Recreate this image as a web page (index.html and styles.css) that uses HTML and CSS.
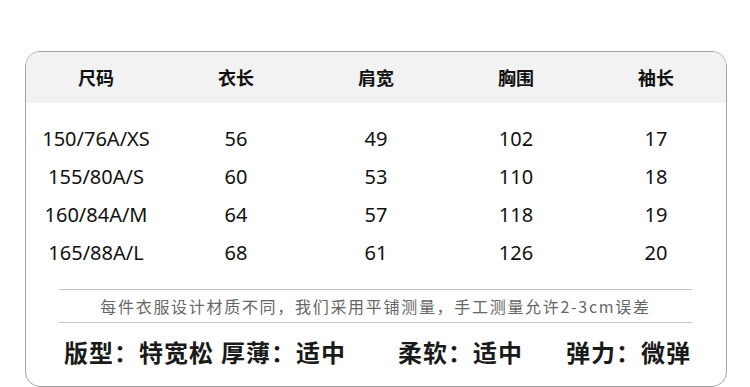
FILE: index.html
```html
<!DOCTYPE html>
<html lang="zh">
<head>
<meta charset="utf-8">
<title>尺码表</title>
<link rel="stylesheet" href="styles.css">
</head>
<body>
<div class="card">
  <div class="row head">
    <div>尺码</div><div>衣长</div><div>肩宽</div><div>胸围</div><div>袖长</div>
  </div>
  <div class="rows">
    <div class="row"><div>150/76A/XS</div><div>56</div><div>49</div><div>102</div><div>17</div></div>
    <div class="row"><div>155/80A/S</div><div>60</div><div>53</div><div>110</div><div>18</div></div>
    <div class="row"><div>160/84A/M</div><div>64</div><div>57</div><div>118</div><div>19</div></div>
    <div class="row"><div>165/88A/L</div><div>68</div><div>61</div><div>126</div><div>20</div></div>
  </div>
  <div class="note">每件衣服设计材质不同，我们采用平铺测量，手工测量允许2-3cm误差</div>
  <div class="props">
    <span class="prop p1">版型：特宽松</span>
    <span class="prop p2">厚薄：适中</span>
    <span class="prop p3">柔软：适中</span>
    <span class="prop p4">弹力：微弹</span>
  </div>
</div>
</body>
</html>
```

FILE: styles.css
```css
* { box-sizing: border-box; }
body {
  margin: 0;
  background: #fff;
  font-family: "Noto Sans", "Noto Sans CJK SC", sans-serif;
  color: #111;
}
.card {
  margin: 51px 0 0 25px;
  width: 702px;
  height: 336px;
  border: 1px solid #a3a3a3;
  border-radius: 15px;
  overflow: hidden;
}
.row {
  display: grid;
  grid-template-columns: repeat(5, 140px);
  text-align: center;
  height: 38px;
  line-height: 38px;
  font-size: 20px;
}
.head {
  height: 51px;
  line-height: 51px;
  background: #f2f2f2;
  font-size: 18px;
  font-weight: bold;
  font-family: "Noto Sans CJK SC", sans-serif;
}
.rows {
  margin-top: 17px;
}
.note {
  margin: 17px 34px 0 33px;
  height: 34px;
  line-height: 32px;
  border-top: 1px solid #c4c4c4;
  border-bottom: 1px solid #c4c4c4;
  text-align: center;
  font-size: 16px;
  letter-spacing: 1.7px;
  color: #666;
  font-family: "Noto Sans CJK SC", sans-serif;
}
.props {
  display: flex;
  margin-top: 9px;
  height: 40px;
  line-height: 40px;
  padding-left: 38px;
  font-family: "Noto Sans CJK SC", sans-serif;
  font-weight: bold;
  font-size: 24px;
  letter-spacing: 1px;
  color: #1a1a1a;
}
.p2 { margin-left: 7px; }
.p3 { margin-left: 52px; }
.p4 { margin-left: 43px; }
```
